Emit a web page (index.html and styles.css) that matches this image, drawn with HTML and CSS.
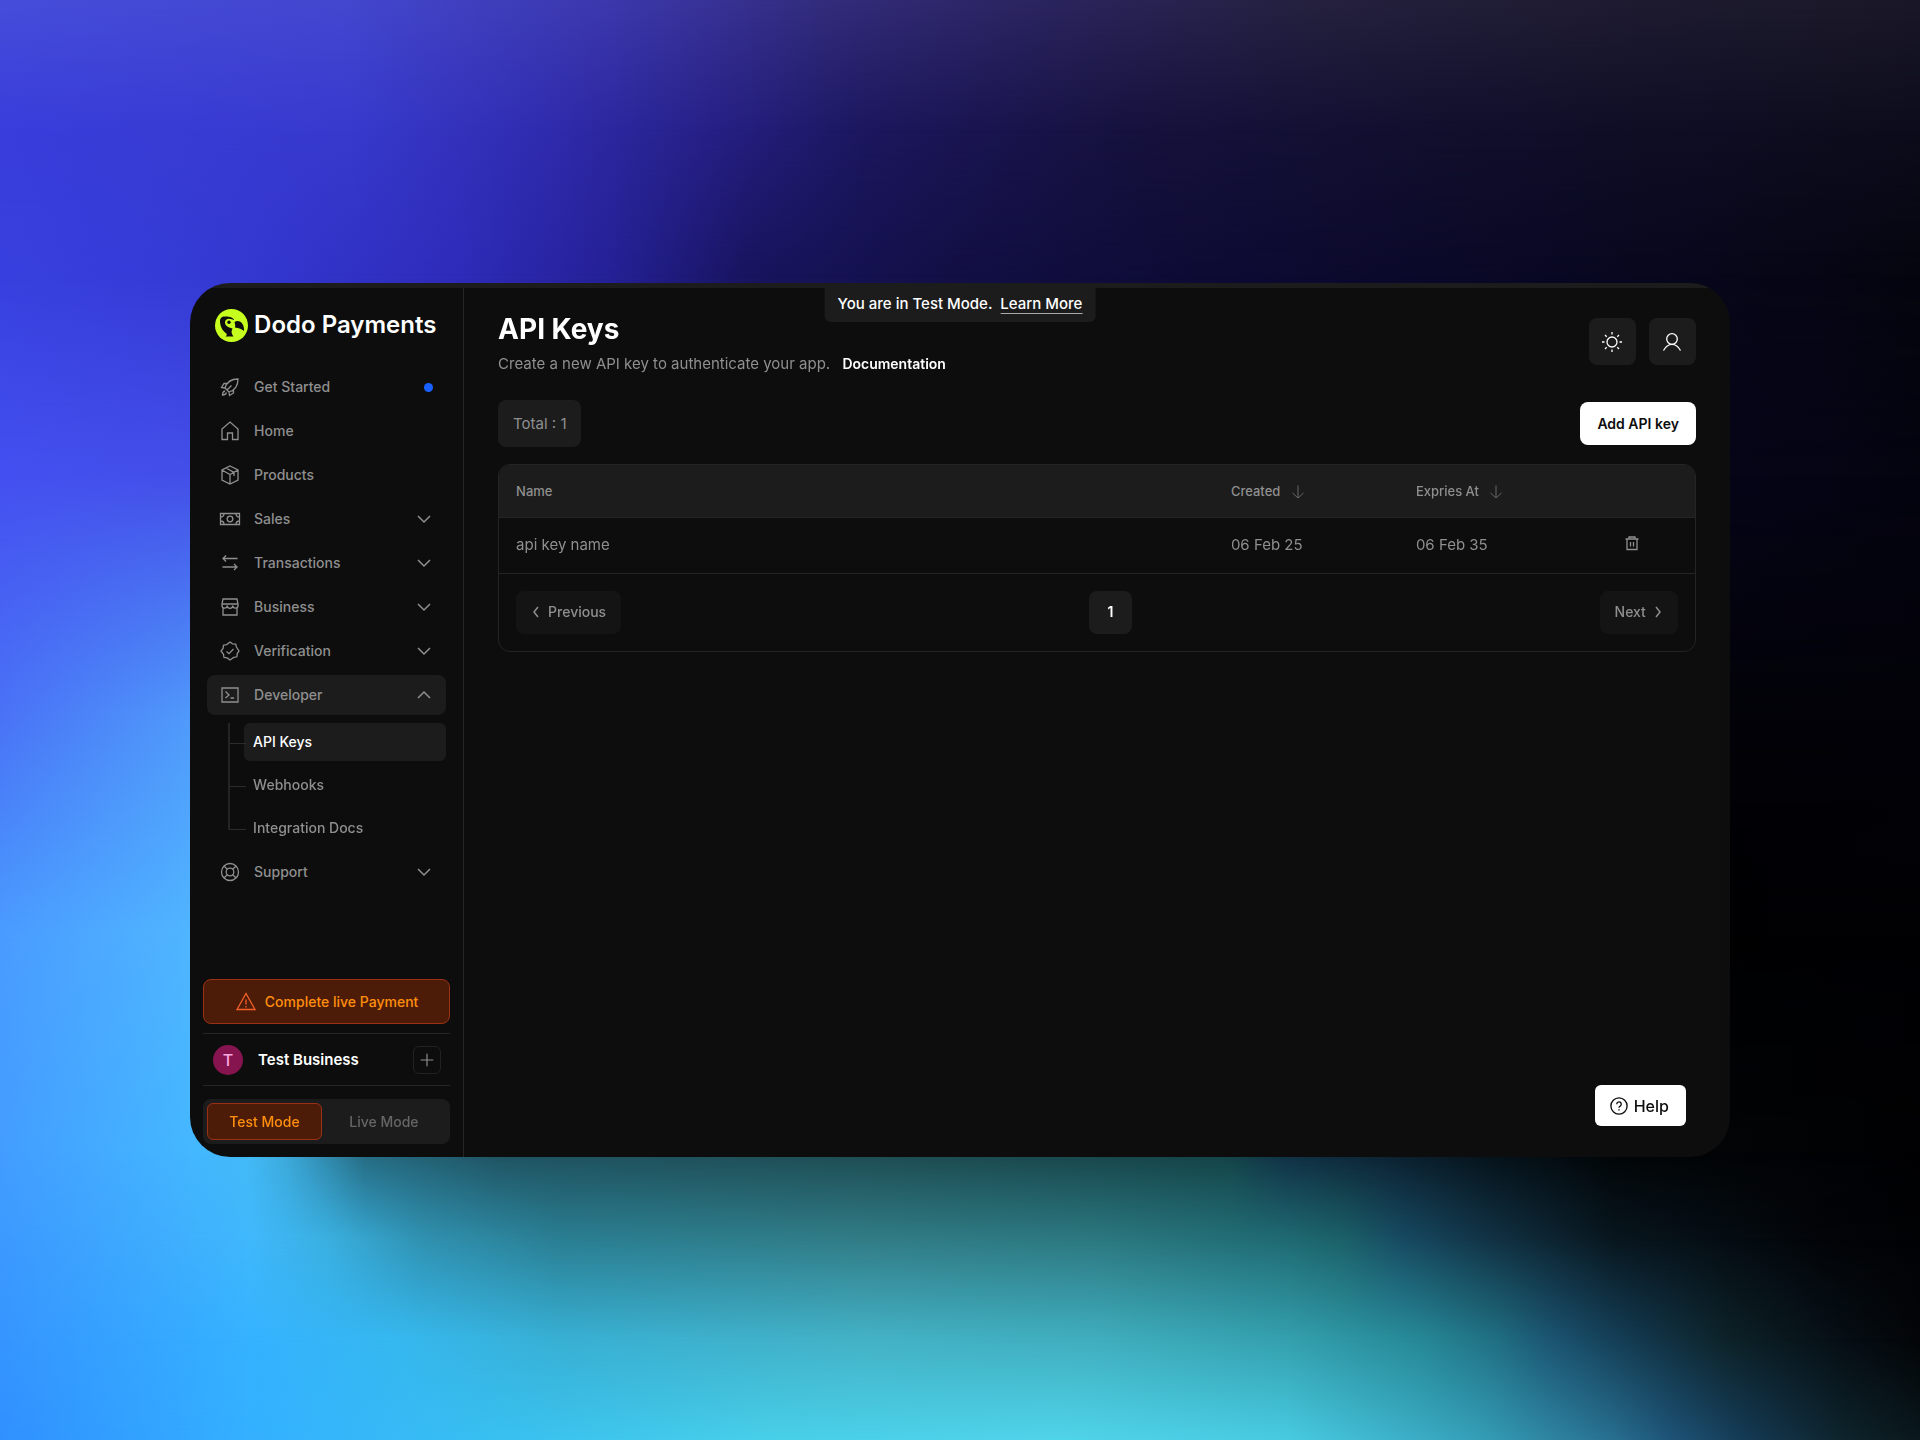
FILE: index.html
```html
<!DOCTYPE html>
<html lang="en">
<head>
<meta charset="utf-8">
<title>API Keys – Dodo Payments</title>
<link rel="stylesheet" href="styles.css">
</head>
<body>
<div class="backdrop" aria-hidden="true">
  <div class="band band-1"></div><div class="band band-2"></div><div class="band band-3"></div>
  <div class="band band-4"></div><div class="band band-5"></div><div class="band band-6"></div>
  <div class="band band-7"></div><div class="band band-8"></div><div class="band band-9"></div>
  <div class="band band-10"></div>
</div>

<svg class="sprite" aria-hidden="true">
  <symbol id="down" viewBox="0 0 20 20"><path d="M4 7l6 6 6-6"/></symbol>
  <symbol id="up" viewBox="0 0 20 20"><path d="M4 13l6-6 6 6"/></symbol>
  <symbol id="arrow" viewBox="0 0 16 16"><path d="M8 1.500v12.500M2.500 9L8 14l5.500-5"/></symbol>
</svg>

<div class="window">
  <div class="banner">You are in Test Mode. <a href="#">Learn More</a></div>

  <aside class="sidebar">
    <a class="brand" href="#">
      <svg class="brand-mark" viewBox="0 0 33 33">
        <circle cx="16.500" cy="16.500" r="16.500" fill="#c6fe1e"/>
        <path d="M5 12.500C5 9 6.500 7.500 10 7.500C14 7.200 17.500 8 19 10.500L17.500 19.500L16.500 22.500Q16.500 25.500 18.500 27.500H10.500Q12.500 26.500 11.500 24.500C7.500 22 5.200 17.500 5 12.500Z" fill="#0d0d0d"/>
        <path d="M10 13.500C10 11 11.800 9.800 14 9.800C16 9.800 17.500 10.600 19.500 11.200L20.500 18.500Q18.500 19 17.500 19.500C13 18.500 10 16.500 10 13.500Z" fill="#c6fe1e"/>
        <circle cx="14" cy="13.300" r="1.700" fill="#0d0d0d"/>
        <path d="M19.500 13C24 10.500 28.500 13.500 29 20V22Q26 19 20 18.500Q20.500 15.500 19.500 13Z" fill="#0d0d0d"/>
      </svg>
      <span>Dodo Payments</span>
    </a>

    <nav class="nav">
      <a class="item" href="#">
        <svg class="icon" viewBox="0 0 20 20"><path d="M7 13l-2-2c1.500-5 6-9 13-9 0 7-4 11.500-9 13zM7 6.500H4L1.500 10.500 5 11M13.500 13v3L9.500 18.500 9 15M7 13l4.500-4.500M5 14c-2 .5-2.500 2-2.500 4 2 0 3.500-.5 4-2.500"/></svg>
        <span class="label">Get Started</span><span class="dot"></span></a>
      <a class="item" href="#">
        <svg class="icon" viewBox="0 0 20 20"><path d="M2 8l8-7 8 7v10.500h-5.500v-6.500h-5v6.500H2z"/></svg>
        <span class="label">Home</span></a>
      <a class="item" href="#">
        <svg class="icon" viewBox="0 0 20 20"><path d="M10 1l8 4v10l-8 4-8-4V5zM2 5l8 4.500L18 5M10 9.500V19M6 3l8 4.500V11"/></svg>
        <span class="label">Products</span></a>
      <button class="item" type="button">
        <svg class="icon" viewBox="0 0 20 20"><path d="M.5 4.500h19v11H.5zM.5 8C2.500 8 4 6.500 4 4.500M16 4.500C16 6.500 17.500 8 19.500 8M.5 12C2.500 12 4 13.500 4 15.500M16 15.500c0-2 1.500-3.500 3.500-3.500"/><circle cx="10" cy="10" r="2.800"/></svg>
        <span class="label">Sales</span><svg class="chev"><use href="#down"/></svg></button>
      <button class="item" type="button">
        <svg class="icon" viewBox="0 0 20 20"><path d="M17.500 5.500H3M6 2.500L3 5.500l3 3M2.500 14H17M14 11l3 3-3 3"/></svg>
        <span class="label">Transactions</span><svg class="chev"><use href="#down"/></svg></button>
      <button class="item" type="button">
        <svg class="icon" viewBox="0 0 20 20"><path d="M3 2h14l1 5v1.500a2.500 2.500 0 0 1-5.200 0 2.700 2.700 0 0 1-5.600 0 2.500 2.500 0 0 1-5.200 0V7zM2 7h16M3 11v7h14v-7"/></svg>
        <span class="label">Business</span><svg class="chev"><use href="#down"/></svg></button>
      <button class="item" type="button">
        <svg class="icon" viewBox="0 0 20 20"><path d="M10 1l2.500 1.800 3.200.2.700 3L19 10l-1.800 2.600-.3 3.200-3.200.6L10 19l-2.800-2.100-3.200-.4-.5-3.200L1 10l2.100-2.600.4-3.200 3.200-.6zM6.500 10.500L9 12.700l4.500-4.700"/></svg>
        <span class="label">Verification</span><svg class="chev"><use href="#down"/></svg></button>
      <button class="item open" type="button" aria-expanded="true">
        <svg class="icon" viewBox="0 0 20 20"><path d="M2 3h16v14H2zM5.500 6.500L9 10l-3.500 3M10.500 13H14"/></svg>
        <span class="label">Developer</span><svg class="chev"><use href="#up"/></svg></button>
      <ul class="subnav">
        <li><a class="active" href="#">API Keys</a></li>
        <li><a href="#">Webhooks</a></li>
        <li><a href="#">Integration Docs</a></li>
      </ul>
      <button class="item" type="button">
        <svg class="icon" viewBox="0 0 20 20"><circle cx="10" cy="10" r="8.500"/><circle cx="10" cy="10" r="3.800"/><path d="M4 4l3.500 3.500M16 4l-3.500 3.500M4 16l3.500-3.500M16 16l-3.500-3.500"/></svg>
        <span class="label">Support</span><svg class="chev"><use href="#down"/></svg></button>
    </nav>

    <button class="complete" type="button">
      <svg class="icon" viewBox="0 0 20 20"><path d="M10 1.500L19 17.500H1zM10 7.500v5M10 14v1.500"/></svg>
      Complete live Payment</button>
    <div class="business">
      <span class="avatar">T</span><span class="business-name">Test Business</span>
      <button class="plus" type="button" aria-label="Add business"><svg viewBox="0 0 20 20"><path d="M10 3v14M3 10h14"/></svg></button>
    </div>
    <div class="modes">
      <button class="mode on" type="button">Test Mode</button>
      <button class="mode" type="button">Live Mode</button>
    </div>
  </aside>

  <main class="main">
    <header class="head">
      <div>
        <h1>API Keys</h1>
        <p>Create a new API key to authenticate your app. <a href="#">Documentation</a></p>
      </div>
      <div class="tools">
        <button type="button" aria-label="Theme"><svg viewBox="0 0 20 20"><circle cx="10" cy="10" r="5"/><path d="M10 0v2.500M10 17.500V20M0 10h2.500M17.500 10H20M3 3l1.700 1.700M15.300 15.300L17 17M3 17l1.700-1.700M15.300 4.700L17 3"/></svg></button>
        <button type="button" aria-label="Account"><svg viewBox="0 0 20 20"><circle cx="10" cy="7" r="5.300"/><path d="M1.500 18.500c2-3.800 5-6.200 8.500-6.200s6.500 2.400 8.500 6.200"/></svg></button>
      </div>
    </header>
    <div class="bar">
      <span class="total">Total : 1</span>
      <button class="add" type="button">Add API key</button>
    </div>
    <section class="card">
      <table>
        <colgroup><col><col class="c-date"><col class="c-date"><col class="c-act"></colgroup>
        <thead><tr><th>Name</th><th>Created <svg><use href="#arrow"/></svg></th><th>Expries At <svg><use href="#arrow"/></svg></th><th></th></tr></thead>
        <tbody><tr><td>api key name</td><td>06 Feb 25</td><td>06 Feb 35</td>
          <td class="act"><button type="button" aria-label="Delete"><svg viewBox="0 0 16 16"><path d="M1.500 4h13M3 4v10.500h10V4M5 4V2h6v2M6.500 7v4.500M9.500 7v4.500"/></svg></button></td></tr></tbody>
      </table>
      <div class="pager">
        <button type="button"><svg viewBox="0 0 10 16"><path d="M7 3L3 8l4 5"/></svg>Previous</button>
        <button class="page" type="button">1</button>
        <button type="button">Next<svg viewBox="0 0 10 16"><path d="M3 3l4 5-4 5"/></svg></button>
      </div>
    </section>
    <button class="help" type="button"><svg viewBox="0 0 20 20"><circle cx="10" cy="10" r="9"/><path d="M7.500 8a2.500 2.500 0 1 1 3.800 2.100c-.9.500-1.300 1-1.300 1.900M10 13.500V15"/></svg>Help</button>
  </main>
</div>
</body>
</html>
```
FILE: styles.css
```css
* { box-sizing: border-box; }
body {
  margin: 0;
  min-height: 100vh;
  display: flex;
  align-items: center;
  justify-content: center;
  padding: 40px 0;
  font-family: Inter, "Liberation Sans", sans-serif;
  font-size: 14px;
  line-height: 20px;
  color: #8f8f8f;
  background: #000;
}
button { font: inherit; color: inherit; background: none; border: 0; padding: 0; }
a { color: inherit; text-decoration: none; }
svg { fill: none; stroke: currentColor; stroke-width: 1.300; flex: none; }
.sprite { display: none; }

/* Backdrop: each band is one horizontal gradient, faded in below the previous one. */
.backdrop { position: fixed; inset: 0; z-index: -1; }
.band { position: absolute; inset: 0; mask-image: linear-gradient(transparent var(--from), #000 var(--to)); }
.band-1 { mask-image: none; background: linear-gradient(90deg, #464dda 0%, #4347cf 18%, #3c38ac 32%, #332c7c 43%, #2b2560 54%, #25213f 68%, #1e1b30 86%, #1a1828 100%); }
.band-2 { --from: 0%; --to: 9%; background: linear-gradient(90deg, #393ddb 0%, #373acd 18%, #302cb0 28%, #262086 37%, #1c175e 45%, #16123f 58%, #110f2c 76%, #0d0c1b 100%); }
.band-3 { --from: 9%; --to: 19%; background: linear-gradient(90deg, #3740de 0%, #3439d2 12%, #2e2bb9 24%, #242094 32%, #18145e 39%, #120f44 50%, #0d0b33 64%, #090822 82%, #05050f 100%); }
.band-4 { --from: 19%; --to: 33%; background: linear-gradient(90deg, #4450f0 0%, #444fe8 10%, #2d2bb0 20%, #1d1872 42%, #0e0b35 62%, #060518 90%, #040410 100%); }
.band-5 { --from: 33%; --to: 50%; background: linear-gradient(90deg, #4a73f6 0%, #509bfb 10%, #2c4ea0 30%, #08081c 60%, #020208 90%, #030208 100%); }
.band-6 { --from: 50%; --to: 65%; background: linear-gradient(90deg, #4a9cff 0%, #50b6ff 10%, #2c7aa0 30%, #08181c 60%, #000002 90%, #010104 100%); }
.band-7 { --from: 65%; --to: 80%; background: linear-gradient(90deg, #439dff 0%, #44b7ff 10%, #42baf6 13%, #3ca8d8 15%, #256a80 19%, #1f5260 26%, #1e4c52 45%, #134246 64%, #102f44 67%, #0c2232 72%, #051118 78%, #020507 84%, #010103 100%); }
.band-8 { --from: 80%; --to: 86%; background: linear-gradient(90deg, #3c99ff 0%, #40b8fc 13%, #3ab0e0 17%, #3091b0 22%, #2a7e92 29%, #317c86 45%, #2c7880 57%, #1f6a72 67%, #1b6068 70%, #174a62 73%, #123548 77%, #08161e 84%, #020408 95%, #010204 100%); }
.band-9 { --from: 86%; --to: 93%; background: linear-gradient(90deg, #3695ff 0%, #35b2ff 13%, #36b8ee 21%, #38b0d4 29%, #44b2c6 45%, #40aebe 57%, #34a0ae 67%, #268896 74%, #206e82 78%, #1b5370 81%, #133a50 85%, #0d2228 90%, #060e14 96%, #030508 100%); }
.band-10 { --from: 93%; --to: 100%; background: linear-gradient(90deg, #3090ff 0%, #34b0ff 13%, #38c0f0 26%, #48cfe9 40%, #50d4ea 55%, #48cbe2 67%, #359fb8 77%, #286f90 84%, #1e5478 87%, #143a54 91%, #0e242c 96%, #0a181c 100%); }

.window {
  position: relative;
  width: 80.2%;
  min-height: 874px;
  display: flex;
  overflow: hidden;
  padding-top: 5px;
  border-radius: 40px;
  background: linear-gradient(#1c1c1c 5px, #0d0d0d 5px);
}
.banner {
  position: absolute;
  top: 0;
  left: 50%;
  transform: translateX(-50%);
  height: 39px;
  padding: 11px 13px 0;
  border-radius: 0 0 6px 6px;
  background: #1c1c1c;
  color: #fff;
  font-size: 15px;
  font-weight: 500;
  white-space: nowrap;
}
.banner a { margin-left: 4px; border-bottom: 1px solid #aaa; }

.sidebar {
  width: 274px;
  flex: none;
  display: flex;
  flex-direction: column;
  padding: 20px 13px 13px;
  border-right: 1px solid #262626;
}
.brand { display: flex; align-items: center; gap: 6px; padding-left: 12px; height: 34px; color: #fff; font-size: 24px; font-weight: 600; white-space: nowrap; }
.brand-mark { width: 33px; height: 33px; stroke: none; }

.nav { padding: 25px 4px 0; flex: 1; font-weight: 500; }
.item { width: 100%; height: 40px; margin-bottom: 4px; padding: 0 12px; display: flex; align-items: center; border-radius: 8px; text-align: left; }
.item.open { background: #1c1c1c; margin-bottom: 8px; }
.icon { width: 22px; height: 20px; }
.label { flex: 1; margin-left: 13px; }
.chev { width: 20px; height: 20px; stroke-width: 1.500; }
.dot { width: 9px; height: 9px; margin-right: 1px; border-radius: 50%; background: #1860ff; }
.subnav { list-style: none; margin: 0; padding: 0 0 0 21px; }
.subnav li { position: relative; height: 43px; padding-left: 16px; }
.subnav li::before { content: ""; position: absolute; left: 0; top: 0; width: 16px; height: 20px; border-left: 2px solid #242424; border-bottom: 1px solid #2c2c2c; }
.subnav li:not(:last-child)::after { content: ""; position: absolute; left: 0; top: 20px; bottom: 0; border-left: 2px solid #242424; }
.subnav a { display: flex; align-items: center; height: 38px; padding-left: 9px; border-radius: 6px; }
.subnav .active { background: #1c1c1c; color: #fff; }

.complete { display: flex; align-items: center; justify-content: center; gap: 8px; height: 45px; border: 1px solid #9a3116; border-radius: 8px; background: #4d1c09; color: #ff8f0d; font-weight: 500; }
.complete svg { color: #f5602a; }
.business { display: flex; align-items: center; height: 53px; margin: 9px 0 13px; padding: 0 9px 0 10px; border: solid #262626; border-width: 1px 0; }
.avatar { width: 30px; height: 30px; border-radius: 50%; background: #86144f; color: #f9a8e0; font-size: 16px; line-height: 30px; text-align: center; font-weight: 500; }
.business-name { flex: 1; margin-left: 15px; color: #fff; font-size: 15px; font-weight: 600; }
.plus { width: 28px; height: 28px; border: 1px solid #222; border-radius: 6px; display: grid; place-items: center; }
.plus svg { width: 18px; height: 18px; }
.modes { display: flex; height: 45px; padding: 4px; border-radius: 8px; background: #1c1c1c; font-weight: 500; }
.mode { flex: 1; border-radius: 6px; color: #666; }
.mode.on { flex: 0 0 48%; border: 1px solid #9a3116; background: #4d1c09; color: #ff8f0d; }

.main { flex: 1; min-width: 0; display: flex; flex-direction: column; padding: 24px 34px 31px; }
.head { display: flex; justify-content: space-between; }
.head h1 { margin: 0; color: #fff; font-size: 28px; line-height: 34px; font-weight: 700; }
.head p { margin: 8px 0 0; font-size: 15px; }
.head p a { margin-left: 8px; color: #fff; font-size: 14px; font-weight: 600; }
.tools { display: flex; gap: 13px; padding-top: 6px; }
.tools button { width: 47px; height: 47px; border-radius: 8px; background: #1c1c1c; color: #fff; display: grid; place-items: center; }
.tools svg { width: 20px; height: 20px; }
.bar { display: flex; justify-content: space-between; align-items: center; margin-top: 26px; }
.total { padding: 14px 15px; height: 47px; border-radius: 8px; background: #1c1c1c; font-size: 15px; line-height: 20px; }
.add { height: 43px; padding: 0 17px; border-radius: 8px; background: #fff; color: #0d0d0d; font-weight: 600; }

.card { margin-top: 17px; border: 1px solid #242424; border-radius: 12px; overflow: hidden; }
table { width: 100%; table-layout: fixed; border-collapse: collapse; }
.c-date { width: 185px; }
.c-act { width: 111px; }
th { height: 52px; padding: 0 0 0 17px; background: #1c1c1c; text-align: left; font-size: 13px; font-weight: 500; }
th svg { width: 16px; height: 16px; margin-left: 6px; vertical-align: -4px; color: #666; stroke-width: 1; }
td { height: 56px; padding: 0 0 0 17px; border: solid #242424; border-width: 1px 0; font-size: 15px; }
td.act { padding-left: 40px; }
.act svg { width: 16px; height: 16px; display: block; }
.pager { display: flex; justify-content: space-between; padding: 17px; }
.pager button { height: 43px; padding: 0 15px; border-radius: 8px; background: #141414; display: flex; align-items: center; gap: 7px; font-weight: 500; }
.pager svg { width: 10px; height: 16px; stroke-width: 1.500; }
.pager .page { width: 43px; justify-content: center; background: #1c1c1c; color: #fff; font-weight: 600; }
.help { align-self: flex-end; margin: auto 10px 0 0; height: 41px; padding: 0 17px 0 15px; border-radius: 6px; background: #fff; color: #0d0d0d; display: flex; align-items: center; gap: 6px; font-size: 16px; font-weight: 500; }
.help svg { width: 18px; height: 18px; stroke-width: 1.500; }
```
